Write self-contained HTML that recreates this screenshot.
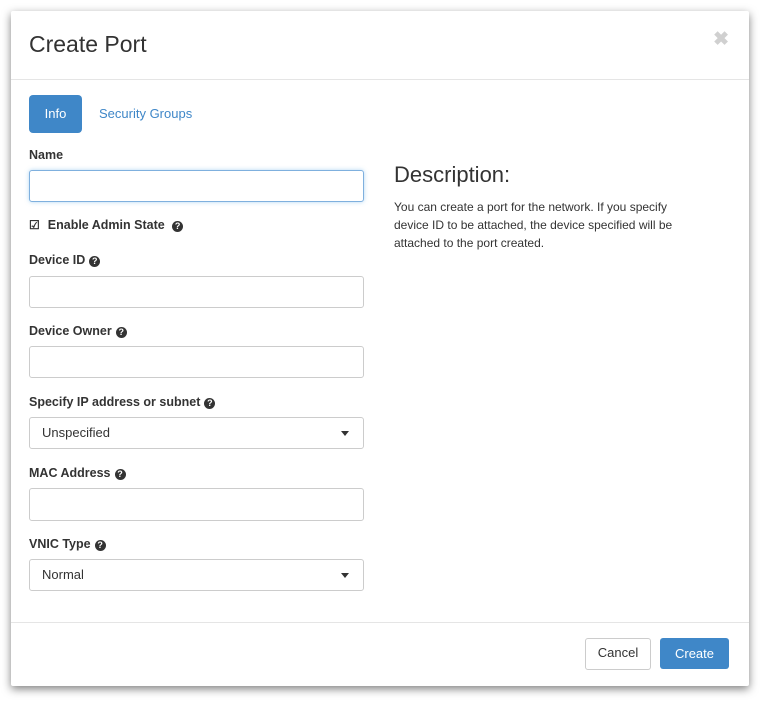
<!DOCTYPE html><html><head><style>
body{margin:0;background:#fff;font-family:"Liberation Sans",sans-serif;color:#333;width:768px;height:705px;position:relative;overflow:hidden}
.m{position:absolute;left:11px;top:11px;width:738px;height:675px;background:#fff;box-shadow:0 3px 9px rgba(0,0,0,.5);border-radius:2px}
.a{position:absolute}
.t{left:18px;top:20px;font-size:23px;color:#333}
.x{right:20px;top:17px;font-size:19px;color:#d0d0d0;font-weight:bold}
.hr{left:0;width:738px;height:1px;background:#e5e5e5}
.lbl{left:18px;font-size:12.5px;font-weight:bold;color:#333}
.in{left:18px;width:333px;height:30px;border:1px solid #ccc;border-radius:3px;background:#fff}
.sel{font-size:13px;line-height:30px;padding-left:12px;box-sizing:border-box;height:32px;width:335px}
.car{position:absolute;right:14px;top:13px;border-left:4px solid transparent;border-right:4px solid transparent;border-top:5px solid #333}
.q{display:inline-block;width:11px;height:11px;border-radius:50%;background:#333;color:#fff;font-size:9px;line-height:11px;text-align:center;vertical-align:0;margin-left:4px}
.btn{border-radius:3px;font-size:13px;text-align:center;line-height:30px;height:30px}
</style></head><body>
<div class="m">
<div class="a t">Create Port</div>
<div class="a x">✖</div>
<div class="a hr" style="top:68px"></div>
<div class="a btn" style="left:18px;top:84px;width:53px;height:38px;line-height:37px;background:#3f87c8;color:#fff;border-radius:4px">Info</div>
<div class="a" style="left:88px;top:95px;font-size:13px;color:#3f87c8">Security Groups</div>
<div class="a lbl" style="top:137px">Name</div>
<div class="a in" style="top:159px;border-color:#7fb0de;box-shadow:0 0 4px rgba(102,175,233,.5)"></div>
<div class="a" style="left:18px;top:207px;font-size:12.5px;font-weight:bold"><span style="font-size:12px;margin-right:8px">☑</span>Enable Admin State <span class="q">?</span></div>
<div class="a lbl" style="top:242px">Device ID<span class="q">?</span></div>
<div class="a in" style="top:265px"></div>
<div class="a lbl" style="top:313px">Device Owner<span class="q">?</span></div>
<div class="a in" style="top:335px"></div>
<div class="a lbl" style="top:384px">Specify IP address or subnet<span class="q">?</span></div>
<div class="a in sel" style="top:406px">Unspecified<div class="car"></div></div>
<div class="a lbl" style="top:455px">MAC Address<span class="q">?</span></div>
<div class="a in" style="top:477px;height:31px"></div>
<div class="a lbl" style="top:526px">VNIC Type<span class="q">?</span></div>
<div class="a in sel" style="top:548px">Normal<div class="car"></div></div>
<div class="a" style="left:383px;top:151px;font-size:22px">Description:</div>
<div class="a" style="left:383px;top:187px;width:304px;font-size:12px;line-height:18px">You can create a port for the network. If you specify device ID to be attached, the device specified will be attached to the port created.</div>
<div class="a hr" style="top:611px"></div>
<div class="a btn" style="left:574px;top:627px;width:64px;border:1px solid #ccc;color:#333;line-height:28px">Cancel</div>
<div class="a btn" style="left:649px;top:627px;width:69px;height:31px;line-height:31px;background:#3f87c8;color:#fff">Create</div>
</div>
</body></html>
